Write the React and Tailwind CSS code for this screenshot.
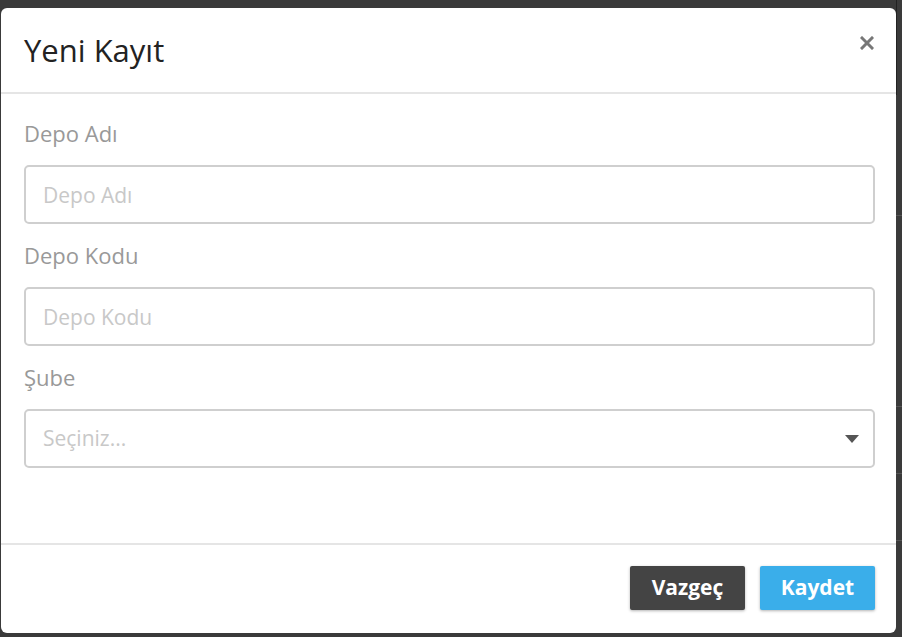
import React from "react";

const font = { fontFamily: '"Open Sans", "Liberation Sans", sans-serif' };

function Field({ label, placeholder }) {
  return (
    <div className="mb-[16px]">
      <label className="block h-[30px] leading-[30px] text-[22px] text-[#999] mb-[17px]">{label}</label>
      <input
        type="text"
        placeholder={placeholder}
        className="w-full h-[59px] px-[17px] border-2 border-[#cfcfcf] rounded-[5px] text-[21px] text-[#555] outline-none placeholder:text-[#c8c8c8] bg-white"
      />
    </div>
  );
}

export default function App() {
  return (
    <div className="w-[902px] h-[637px] bg-[#3a3a3a] overflow-hidden relative" style={font}>
      {/* arka plan tablosundan görünen kısımlar */}
      <div className="absolute right-0 top-0 w-[6px] h-full">
        <div className="h-[95px] border-l border-[#222]" />
        <div className="mt-[120px] h-[1px] bg-[#555]" />
        <div className="mt-[190px] h-[1px] bg-[#555]" />
        <div className="mt-[66px] h-[1px] bg-[#555]" />
        <div className="mt-[66px] h-[1px] bg-[#555]" />
      </div>
      <div className="ml-[1px] mt-[8px] w-[895px] h-[625px] bg-white rounded-[6px] flex flex-col">
        {/* Başlık */}
        <div className="h-[86px] flex items-center justify-between pl-[23px] pr-[22px] border-b-2 border-[#e5e5e5] shrink-0">
          <h2 className="text-[31px] text-[#222] leading-none">Yeni Kayıt</h2>
          <button className="text-[#777] mt-[-14px]">
            <svg width="14" height="14" viewBox="0 0 14 14">
              <path d="M2 2 L12 12 M12 2 L2 12" stroke="#777" strokeWidth="3" strokeLinecap="square" />
            </svg>
          </button>
        </div>

        {/* Form */}
        <div className="flex-1 px-[23px] pr-[21px] pt-[24px]">
          <Field label="Depo Adı" placeholder="Depo Adı" />
          <Field label="Depo Kodu" placeholder="Depo Kodu" />
          <div>
            <label className="block h-[30px] leading-[30px] text-[22px] text-[#999] mb-[17px]">Şube</label>
            <div className="w-full h-[59px] px-[17px] border-2 border-[#cfcfcf] rounded-[5px] flex items-center justify-between">
              <span className="text-[21px] text-[#c8c8c8]">Seçiniz...</span>
              <svg width="14" height="8" viewBox="0 0 14 8" className="mr-[-3px]">
                <path d="M0 0 H14 L7 8 Z" fill="#555" />
              </svg>
            </div>
          </div>
        </div>

        {/* Alt */}
        <div className="h-[90px] border-t-2 border-[#e5e5e5] flex items-start justify-end gap-[15px] pr-[21px] pt-[21px] shrink-0">
          <button className="w-[115px] h-[44px] bg-[#444] text-white font-bold text-[21px] rounded-[2px] shadow-[0_1px_3px_rgba(0,0,0,0.3)]">
            Vazgeç
          </button>
          <button className="w-[115px] h-[44px] bg-[#3aaeea] text-white font-bold text-[21px] rounded-[2px] shadow-[0_1px_3px_rgba(0,0,0,0.3)]">
            Kaydet
          </button>
        </div>
      </div>
    </div>
  );
}
